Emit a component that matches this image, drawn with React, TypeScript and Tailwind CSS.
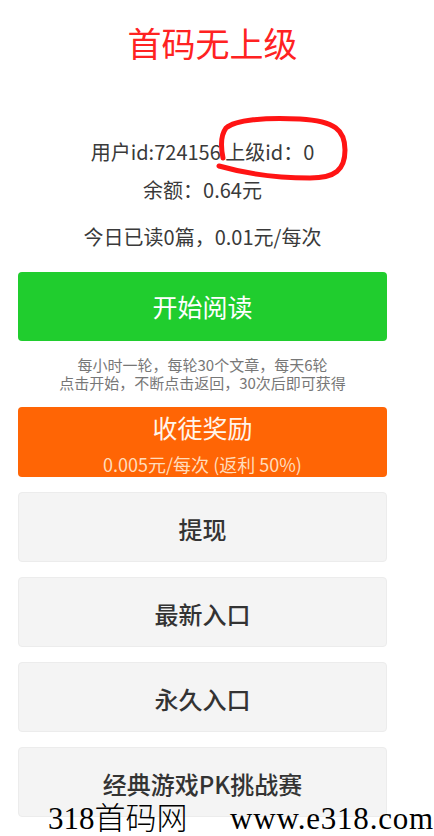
import React from 'react'

const cjk = { fontFamily: '"Noto Sans CJK SC", "Noto Sans", sans-serif' }

function GrayButton({ label }: { label: string }) {
  return (
    <button className="w-full h-[70px] rounded-[4px] bg-[#f4f4f4] border border-[#ececec] text-[24px] font-medium text-[#333] flex items-center justify-center leading-none pt-[3px]">
      {label}
    </button>
  )
}

export default function App() {
  return (
    <div className="relative h-[836px] w-[434px] overflow-hidden bg-white" style={cjk}>
      <div className="ml-[18px] w-[369px] flex flex-col items-center">
        {/* title */}
        <h1 className="mt-[23px] pl-[20px] text-[34px] leading-[40px] text-[#ff2222] font-normal">首码无上级</h1>

        {/* user info */}
        <p className="mt-[77px] text-[20px] leading-[24px] text-[#3a3a3a]">用户id:724156 上级id：0</p>
        <p className="mt-[14px] text-[20px] leading-[24px] text-[#3a3a3a]">余额：0.64元</p>
        <p className="mt-[23px] text-[20px] leading-[24px] text-[#3a3a3a]">今日已读0篇，0.01元/每次</p>

        {/* start reading */}
        <button className="mt-[23px] w-full h-[69px] rounded-[4px] bg-[#20cd2e] text-white text-[25px] leading-none flex items-center justify-center">
          开始阅读
        </button>

        <p className="mt-[15px] text-[15px] leading-[18px] text-[#777] text-center">
          每小时一轮，每轮30个文章，每天6轮
          <br />
          点击开始，不断点击返回，30次后即可获得
        </p>

        {/* invite reward */}
        <button className="mt-[15px] w-full h-[70px] rounded-[4px] bg-[#ff6505] flex flex-col items-center pt-[5px]">
          <span className="text-[25px] leading-[30px] text-[#fff5ec]">收徒奖励</span>
          <span className="mt-[12px] text-[18px] leading-[20px] text-[#ffdcbc]">0.005元/每次 (返利 50%)</span>
        </button>

        <div className="mt-[15px] w-full flex flex-col gap-[15px]">
          <GrayButton label="提现" />
          <GrayButton label="最新入口" />
          <GrayButton label="永久入口" />
          <GrayButton label="经典游戏PK挑战赛" />
        </div>
      </div>

      {/* hand-drawn red circle annotation */}
      <svg className="absolute left-0 top-0 pointer-events-none" width="434" height="836" viewBox="0 0 434 836">
        <path
          d="M219 166 C240 172, 270 178, 310 178 C335 178, 345 170, 345 150 C345 130, 335 121, 300 119 C265 117, 235 120, 226 128 C220 136, 221 148, 223 158"
          fill="none"
          stroke="#ff1414"
          strokeWidth="5"
          strokeLinecap="round"
        />
      </svg>

      {/* watermark */}
      <div
        className="absolute left-[48px] top-[803px] w-[386px] flex text-[31px] leading-none text-black whitespace-pre"
        style={{ fontFamily: '"Liberation Serif", "Noto Sans CJK SC", serif' }}
      >
        <span className="font-light">318首码网</span>
        <span className="ml-auto tracking-[0.8px]">www.e318.com</span>
      </div>
    </div>
  )
}
